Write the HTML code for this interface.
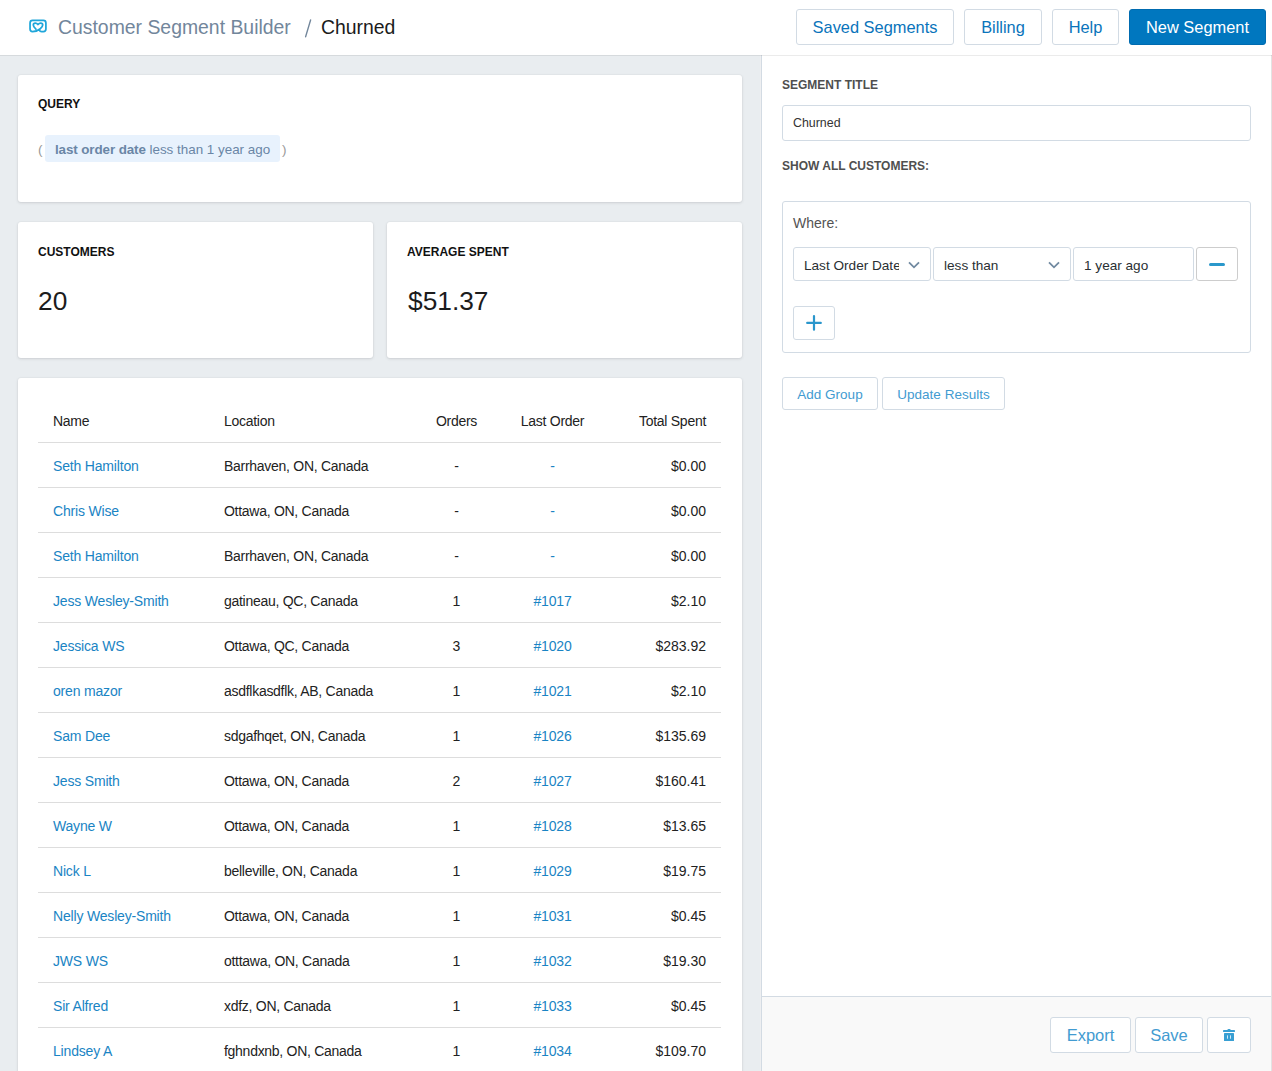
<!DOCTYPE html>
<html><head><meta charset="utf-8">
<style>
*{box-sizing:border-box;margin:0;padding:0}
html,body{width:1272px;height:1071px;overflow:hidden;background:#fff;font-family:"Liberation Sans",sans-serif;color:#212b36}
.abs{position:absolute}
#hdr{position:absolute;left:0;top:0;width:1272px;height:55px;background:#fff;box-shadow:0 1px 0 rgba(0,0,0,.08);z-index:5}
.crumb{position:absolute;top:13px;font-size:19.4px;line-height:28px;white-space:nowrap}
.hbtn{position:absolute;top:9px;height:36px;border:1px solid #d2dbe4;border-radius:3px;background:#fff;color:#0a74bb;font-size:16.4px;line-height:34px;text-align:center;white-space:nowrap}
.hbtn.primary{background:#0077bf;border-color:#006bb0;color:#fff}
#left{position:absolute;left:0;top:55px;width:760px;height:1016px;background:#e9edf0}
#gut{position:absolute;left:760px;top:55px;width:1px;height:1016px;background:#eeeff1}
.card{position:absolute;left:18px;width:724px;background:#fff;border-radius:3px;box-shadow:0 0 0 1px rgba(63,63,68,.02),0 1px 3px 0 rgba(63,63,68,.15)}
.ctitle{position:absolute;left:20px;font-size:12px;font-weight:700;line-height:14px;color:#111;white-space:nowrap}
#right{position:absolute;left:761px;top:55px;width:511px;height:1016px;background:#fff;border-left:1px solid #d3dbe3;border-right:1px solid #e3e3e3}
.rlabel{position:absolute;left:20px;font-size:12px;font-weight:700;line-height:14px;color:#4f4f4f;white-space:nowrap}
.box{position:absolute;border:1px solid #d2dbe4;border-radius:3px;background:#fff}
.sbtn{position:absolute;border:1px solid #d2dbe4;border-radius:3px;background:#fff;color:#429bd1;text-align:center;white-space:nowrap}
table{border-collapse:collapse;position:absolute;left:20px;top:20px;width:683px;table-layout:fixed}
td,th{height:45px;font-size:14px;letter-spacing:-0.28px;font-weight:400;padding:2px 15px 0;border-top:1px solid #dddddd;white-space:nowrap;color:#222}
th{height:44px;border-top:none}
tr td{height:45px}
.l{text-align:left}.c{text-align:center}.r{text-align:right}
td.c,td.r{font-size:14px;letter-spacing:0}
td.lnk{letter-spacing:-0.18px}
a,.lnk{color:#1a84c4;text-decoration:none}
</style></head><body>
<div id="hdr">
  <svg class="abs" style="left:20px;top:10px" width="40" height="35" viewBox="0 0 40 35">
    <path d="M19.4 20.3 Q19.9 21.6 21.6 21.6 H23.4 Q25.9 21.6 25.9 19.1 V12.9 Q25.9 10.4 23.4 10.4 H12.55 Q10.05 10.4 10.05 12.9 V19.1 Q10.05 21.6 12.55 21.6 Q16.8 21.6 20 19 Q22.7 16.8 22.7 15 Q22.7 13.1 20.7 13.1 Q19.2 13.1 18 14.5 Q16.8 13.1 15.3 13.1 Q13.3 13.1 13.3 15 Q13.3 16.7 15.9 19.1" fill="none" stroke="#1fa6da" stroke-width="1.75" stroke-linecap="round" stroke-linejoin="round"/>
  </svg>
  <div class="crumb" style="left:58px;color:#72869b">Customer Segment Builder</div>
  <svg class="abs" style="left:300px;top:15px" width="16" height="26" viewBox="0 0 16 26"><path d="M10.6 5 L5.6 21.8" stroke="#72869b" stroke-width="1.35" stroke-linecap="round"/></svg>
  <div class="crumb" style="left:321px;color:#1b1b1b">Churned</div>
  <div class="hbtn" style="left:796px;width:158px">Saved Segments</div>
  <div class="hbtn" style="left:964px;width:78px">Billing</div>
  <div class="hbtn" style="left:1052px;width:67px">Help</div>
  <div class="hbtn primary" style="left:1129px;width:137px">New Segment</div>
</div>

<div id="left">
  <div class="card" style="top:20px;height:127px">
    <div class="ctitle" style="top:22px">QUERY</div>
    <div class="abs" style="left:20px;top:61px;font-size:13.5px;line-height:27px;color:#999">(</div>
    <div class="abs" style="left:27px;top:60px;width:235px;height:27px;background:#e8f2fd;border-radius:3px"></div>
    <div class="abs" style="left:37px;top:61px;font-size:13.4px;line-height:27px;color:#6a86a6;white-space:nowrap"><b style="letter-spacing:-0.1px">last order date</b> less than 1 year ago</div>
    <div class="abs" style="left:264px;top:61px;font-size:13.5px;line-height:27px;color:#999">)</div>
  </div>
  <div class="card" style="top:167px;height:136px;width:355px">
    <div class="ctitle" style="top:23px">CUSTOMERS</div>
    <div class="abs" style="left:20px;top:63px;font-size:26.3px;line-height:32px;color:#1c1c1c">20</div>
  </div>
  <div class="card" style="top:167px;height:136px;left:387px;width:355px">
    <div class="ctitle" style="top:23px">AVERAGE SPENT</div>
    <div class="abs" style="left:21px;top:63px;font-size:26.3px;line-height:32px;color:#1c1c1c">$51.37</div>
  </div>
  <div class="card" style="top:323px;height:760px">
    <table>
      <colgroup><col style="width:171px"><col style="width:200px"><col style="width:95px"><col style="width:97px"><col style="width:120px"></colgroup>
      <tr><th class="l">Name</th><th class="l">Location</th><th class="c">Orders</th><th class="c">Last Order</th><th class="r">Total Spent</th></tr>
      <tr><td class="lnk">Seth Hamilton</td><td>Barrhaven, ON, Canada</td><td class="c">-</td><td class="c lnk">-</td><td class="r">$0.00</td></tr>
      <tr><td class="lnk">Chris Wise</td><td>Ottawa, ON, Canada</td><td class="c">-</td><td class="c lnk">-</td><td class="r">$0.00</td></tr>
      <tr><td class="lnk">Seth Hamilton</td><td>Barrhaven, ON, Canada</td><td class="c">-</td><td class="c lnk">-</td><td class="r">$0.00</td></tr>
      <tr><td class="lnk">Jess Wesley-Smith</td><td>gatineau, QC, Canada</td><td class="c">1</td><td class="c lnk">#1017</td><td class="r">$2.10</td></tr>
      <tr><td class="lnk">Jessica WS</td><td>Ottawa, QC, Canada</td><td class="c">3</td><td class="c lnk">#1020</td><td class="r">$283.92</td></tr>
      <tr><td class="lnk">oren mazor</td><td>asdflkasdflk, AB, Canada</td><td class="c">1</td><td class="c lnk">#1021</td><td class="r">$2.10</td></tr>
      <tr><td class="lnk">Sam Dee</td><td>sdgafhqet, ON, Canada</td><td class="c">1</td><td class="c lnk">#1026</td><td class="r">$135.69</td></tr>
      <tr><td class="lnk">Jess Smith</td><td>Ottawa, ON, Canada</td><td class="c">2</td><td class="c lnk">#1027</td><td class="r">$160.41</td></tr>
      <tr><td class="lnk">Wayne W</td><td>Ottawa, ON, Canada</td><td class="c">1</td><td class="c lnk">#1028</td><td class="r">$13.65</td></tr>
      <tr><td class="lnk">Nick L</td><td>belleville, ON, Canada</td><td class="c">1</td><td class="c lnk">#1029</td><td class="r">$19.75</td></tr>
      <tr><td class="lnk">Nelly Wesley-Smith</td><td>Ottawa, ON, Canada</td><td class="c">1</td><td class="c lnk">#1031</td><td class="r">$0.45</td></tr>
      <tr><td class="lnk">JWS WS</td><td>otttawa, ON, Canada</td><td class="c">1</td><td class="c lnk">#1032</td><td class="r">$19.30</td></tr>
      <tr><td class="lnk">Sir Alfred</td><td>xdfz, ON, Canada</td><td class="c">1</td><td class="c lnk">#1033</td><td class="r">$0.45</td></tr>
      <tr><td class="lnk">Lindsey A</td><td>fghndxnb, ON, Canada</td><td class="c">1</td><td class="c lnk">#1034</td><td class="r">$109.70</td></tr>
      <tr><td class="lnk">&nbsp;</td><td></td><td></td><td></td><td></td></tr>
    </table>
  </div>
</div>

<div id="gut"></div>
<div id="right">
  <div class="rlabel" style="top:23px">SEGMENT TITLE</div>
  <div class="box" style="left:20px;top:50px;width:469px;height:36px">
    <div class="abs" style="left:10px;top:9px;font-size:12.4px;line-height:16px;color:#333">Churned</div>
  </div>
  <div class="rlabel" style="top:104px">SHOW ALL CUSTOMERS:</div>
  <div class="box" style="left:20px;top:146px;width:469px;height:152px">
    <div class="abs" style="left:10px;top:12px;font-size:14px;line-height:18px;color:#535353">Where:</div>
    <div class="box" style="left:10px;top:45px;width:138px;height:34px;overflow:hidden">
      <div class="abs" style="left:10px;top:2px;width:95px;overflow:hidden;font-size:13.6px;line-height:32px;color:#2a2f33;white-space:nowrap">Last Order Date</div>
      <svg class="abs" style="left:114px;top:13px" width="13" height="8" viewBox="0 0 13 8"><path d="M1 1.3 L6 6.3 L11 1.3" fill="none" stroke="#7089a0" stroke-width="1.8"/></svg>
    </div>
    <div class="box" style="left:150px;top:45px;width:138px;height:34px">
      <div class="abs" style="left:10px;top:2px;font-size:13.6px;line-height:32px;color:#2a2f33;white-space:nowrap">less than</div>
      <svg class="abs" style="left:114px;top:13px" width="13" height="8" viewBox="0 0 13 8"><path d="M1 1.3 L6 6.3 L11 1.3" fill="none" stroke="#7089a0" stroke-width="1.8"/></svg>
    </div>
    <div class="box" style="left:290px;top:45px;width:121px;height:34px">
      <div class="abs" style="left:10px;top:2px;font-size:13.6px;line-height:32px;color:#2a2f33;white-space:nowrap">1 year ago</div>
    </div>
    <div class="box" style="left:413px;top:45px;width:42px;height:34px;border-color:#cdcdcd">
      <div class="abs" style="left:12px;top:14.5px;width:16px;height:3px;background:#2a98cb;border-radius:1.5px"></div>
    </div>
    <div class="box" style="left:10px;top:104px;width:42px;height:34px">
      <svg class="abs" style="left:0;top:0" width="40" height="32" viewBox="0 0 40 32"><path d="M13.2 15.9 H26.8 M20 9.1 V22.7" stroke="#2a96cc" stroke-width="2.2" stroke-linecap="round"/></svg>
    </div>
  </div>
  <div class="sbtn" style="left:20px;top:322px;width:96px;height:33px;font-size:13.5px;line-height:33px">Add Group</div>
  <div class="sbtn" style="left:120px;top:322px;width:123px;height:33px;font-size:13.5px;line-height:33px">Update Results</div>
  <div class="abs" style="left:0;top:941px;width:509px;height:75px;background:#f9f9f9;border-top:1px solid #d3dbe3">
    <div class="sbtn" style="left:288px;top:20px;width:81px;height:36px;font-size:16.5px;line-height:34px">Export</div>
    <div class="sbtn" style="left:373px;top:20px;width:68px;height:36px;font-size:16.5px;line-height:34px">Save</div>
    <div class="sbtn" style="left:445px;top:20px;width:44px;height:36px">
      <svg class="abs" style="left:2px;top:0" width="40" height="34" viewBox="0 0 40 34"><path d="M17.3 12.2 Q17.5 11 18.5 11 H19.6 Q20.6 11 20.8 12.2 Z" fill="#389fd3"/><rect x="13" y="12" width="12" height="2" rx="0.4" fill="#389fd3"/><rect x="14" y="15" width="10" height="8" rx="0.5" fill="#389fd3"/><rect x="17.1" y="17" width="0.9" height="3.8" rx="0.4" fill="#e6f2fa"/><rect x="20.1" y="17" width="0.9" height="3.8" rx="0.4" fill="#e6f2fa"/></svg>
    </div>
  </div>
</div>
</body></html>
